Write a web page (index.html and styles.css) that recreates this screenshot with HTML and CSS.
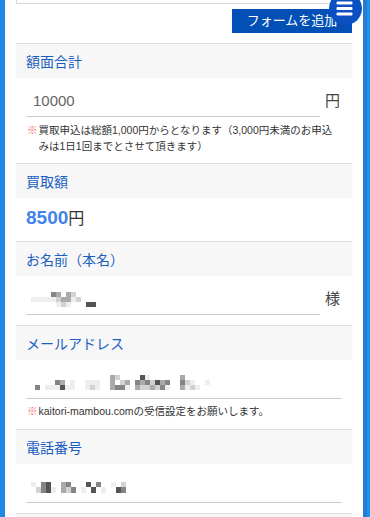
FILE: index.html
```html
<!DOCTYPE html>
<html lang="ja">
<head>
<meta charset="utf-8">
<title>フォーム</title>
<link rel="stylesheet" href="styles.css">
</head>
<body>
<div class="strip-left"></div>
<div class="main">
  <div class="prev-box"></div>
  <div class="btn-row"><button class="add-btn">フォームを追加</button></div>

  <section class="sec">
    <div class="sec-head">額面合計</div>
    <div class="row">
      <div class="field"><span class="val">10000</span></div>
      <span class="suffix">円</span>
    </div>
    <p class="note"><span class="mark">※</span><span class="note-text">買取申込は総額1,000円からとなります（3,000円未満のお申込<br>みは1日1回までとさせて頂きます）</span></p>
  </section>

  <section class="sec">
    <div class="sec-head">買取額</div>
    <div class="price"><span class="num">8500</span><span class="yen">円</span></div>
  </section>

  <section class="sec">
    <div class="sec-head">お名前（本名）</div>
    <div class="row row-last">
      <div class="field">
        <div class="mosaic m-name">
          <div class="mr"><i></i><i></i><i></i><i></i><i class="d"></i><i class="c"></i><i></i><i class="c"></i><i class="b"></i><i></i><i></i><i></i><i></i><i></i></div>
          <div class="mr"><i class="a"></i><i class="a"></i><i class="a"></i><i class="a"></i><i class="a"></i><i class="b"></i><i class="c"></i><i class="c"></i><i class="a"></i><i class="b"></i><i></i><i></i><i></i><i></i></div>
          <div class="mr"><i></i><i></i><i></i><i></i><i></i><i class="a"></i><i class="b"></i><i class="a"></i><i></i><i></i><i></i><i class="e"></i><i class="e"></i><i></i></div>
        </div>
      </div>
      <span class="suffix">様</span>
    </div>
  </section>

  <section class="sec">
    <div class="sec-head">メールアドレス</div>
    <div class="row">
      <div class="field">
        <div class="mosaic m-mail">
          <div class="mr"><i></i><i></i><i></i><i></i><i></i><i></i><i></i><i></i><i></i><i></i><i></i><i></i><i></i><i></i><i></i><i class="c"></i><i class="b"></i><i></i><i></i><i></i><i></i><i class="e"></i><i class="a"></i><i></i><i></i><i></i><i></i><i></i><i></i><i class="c"></i><i></i><i></i><i></i><i></i><i></i></div>
          <div class="mr"><i></i><i></i><i></i><i></i><i class="d"></i><i class="c"></i><i></i><i class="a"></i><i></i><i></i><i class="a"></i><i class="a"></i><i class="a"></i><i></i><i></i><i class="c"></i><i></i><i class="b"></i><i class="c"></i><i></i><i class="d"></i><i class="c"></i><i class="d"></i><i class="b"></i><i class="e"></i><i class="c"></i><i class="d"></i><i></i><i></i><i class="d"></i><i class="b"></i><i class="a"></i><i></i><i></i><i class="a"></i></div>
          <div class="mr"><i class="d"></i><i></i><i class="a"></i><i class="a"></i><i class="a"></i><i class="e"></i><i class="a"></i><i class="a"></i><i></i><i></i><i class="a"></i><i class="b"></i><i class="a"></i><i></i><i></i><i class="c"></i><i class="d"></i><i class="d"></i><i class="a"></i><i></i><i class="c"></i><i class="b"></i><i class="b"></i><i class="c"></i><i class="b"></i><i class="d"></i><i class="a"></i><i></i><i></i><i class="c"></i><i class="a"></i><i class="b"></i><i class="a"></i><i></i><i></i></div>
        </div>
      </div>
    </div>
    <p class="note note-mail"><span class="mark">※</span><span class="note-text">kaitori-mambou.comの受信設定をお願いします。</span></p>
  </section>

  <section class="sec">
    <div class="sec-head">電話番号</div>
    <div class="row row-last">
      <div class="field">
        <div class="mosaic m-tel">
          <div class="mr"><i class="a"></i><i></i><i class="d"></i><i class="e"></i><i></i><i></i><i class="c"></i><i class="d"></i><i></i><i></i><i></i><i class="e"></i><i></i><i class="d"></i><i></i><i></i><i class="a"></i><i></i><i class="b"></i></div>
          <div class="mr"><i></i><i class="b"></i><i class="d"></i><i class="e"></i><i class="a"></i><i></i><i class="c"></i><i class="b"></i><i class="d"></i><i></i><i class="a"></i><i></i><i class="e"></i><i></i><i class="a"></i><i></i><i></i><i class="e"></i><i class="d"></i></div>
        </div>
      </div>
    </div>
  </section>

  <section class="sec">
    <div class="sec-head"></div>
  </section>

  <div class="menu-btn" aria-label="メニュー">
    <svg width="33" height="33" viewBox="0 0 33 33"><rect x="7.5" y="9.5" width="16" height="3" rx="1" fill="#fff"/><rect x="7.5" y="15" width="16" height="3" rx="1" fill="#fff"/><rect x="7.5" y="20.5" width="16" height="3" rx="1" fill="#fff"/></svg>
  </div>
</div>
<div class="strip-right-a"></div>
<div class="strip-right-b"></div>
</body>
</html>
```
FILE: styles.css
```css
html, body {
  margin: 0;
  padding: 0;
  height: 517px;
  overflow: hidden;
}
body {
  display: flex;
  background: #fff;
  font-family: "Liberation Sans", "Noto Sans CJK JP", sans-serif;
  color: #333;
}
.strip-left {
  width: 5px;
  flex: none;
  background: #1f8ae6;
}
.strip-right-a {
  width: 4px;
  flex: none;
  background: #2b7ad0;
}
.strip-right-b {
  width: 3px;
  flex: none;
  background: #1696ee;
}
.main {
  flex: 1;
  position: relative;
  padding: 0 11px;
}
.prev-box {
  height: 3px;
  border: 1px solid #d6d6d6;
  border-top: none;
}
.btn-row {
  display: flex;
  justify-content: flex-end;
  margin-top: 5px;
  margin-bottom: 10px;
}
.add-btn {
  border: none;
  margin: 0;
  background: #0250b6;
  color: #fff;
  height: 24px;
  width: 120px;
  padding: 0;
  font-family: "Liberation Sans", "Noto Sans CJK JP", sans-serif;
  font-size: 13px;
  line-height: 24px;
  text-align: center;
}
.sec {
  border-top: 1px solid #dcdcdc;
}
.sec-head {
  height: 34px;
  display: flex;
  align-items: center;
  padding-left: 10px;
  background: #f7f7f7;
  color: #1a5ec2;
  font-size: 14px;
}
.row {
  display: flex;
  align-items: flex-end;
  padding: 8px 10px 0 10px;
}
.row-last {
  padding-bottom: 10px;
}
.field {
  flex: 1;
  height: 30px;
  border-bottom: 1px solid #cccccc;
  display: flex;
  align-items: center;
  padding-left: 7px;
}
.val {
  font-size: 15px;
  color: #666;
  line-height: 30px;
}
.suffix {
  width: 17px;
  margin-left: 5px;
  font-size: 15px;
  line-height: 30px;
  align-self: flex-start;
  color: #444;
  padding-top: 0;
}
.note {
  margin: 5px 0 0 0;
  padding: 0 10px 9px 11px;
  display: flex;
  font-size: 10.5px;
  line-height: 16px;
  color: #333;
}
.note-mail {
  margin-top: 4px;
  padding-bottom: 10px;
}
.mark {
  color: #f25a5a;
  margin-right: 1px;
  flex: none;
}
.price {
  padding: 8px 10px 10px 10px;
  line-height: 24px;
  display: flex;
  align-items: baseline;
}
.num {
  font-size: 19px;
  font-weight: bold;
  color: #4283ec;
}
.yen {
  font-size: 16px;
  color: #333;
}
.mosaic {
  display: flex;
  flex-direction: column;
}
.mr {
  display: flex;
  height: 5px;
}
.mr i {
  width: 5px;
  height: 5px;
  display: block;
}
.m-tel .mr {
  height: 5.5px;
}
.m-tel .mr i {
  width: 5px;
  height: 5.5px;
}
.m-name {
  margin-left: -2px;
}
.m-mail {
  margin-left: 2px;
  margin-top: -1px;
}
.m-tel {
  margin-left: -2px;
}
.mr i.a { background: #eeeeee; }
.mr i.b { background: #d2d2d2; }
.mr i.c { background: #aaaaaa; }
.mr i.d { background: #858585; }
.mr i.e { background: #555555; }
.menu-btn {
  position: absolute;
  left: 324px;
  top: -8px;
  width: 33px;
  height: 33px;
  border-radius: 50%;
  background: #0a50c2;
}
.menu-btn svg {
  display: block;
}
```
